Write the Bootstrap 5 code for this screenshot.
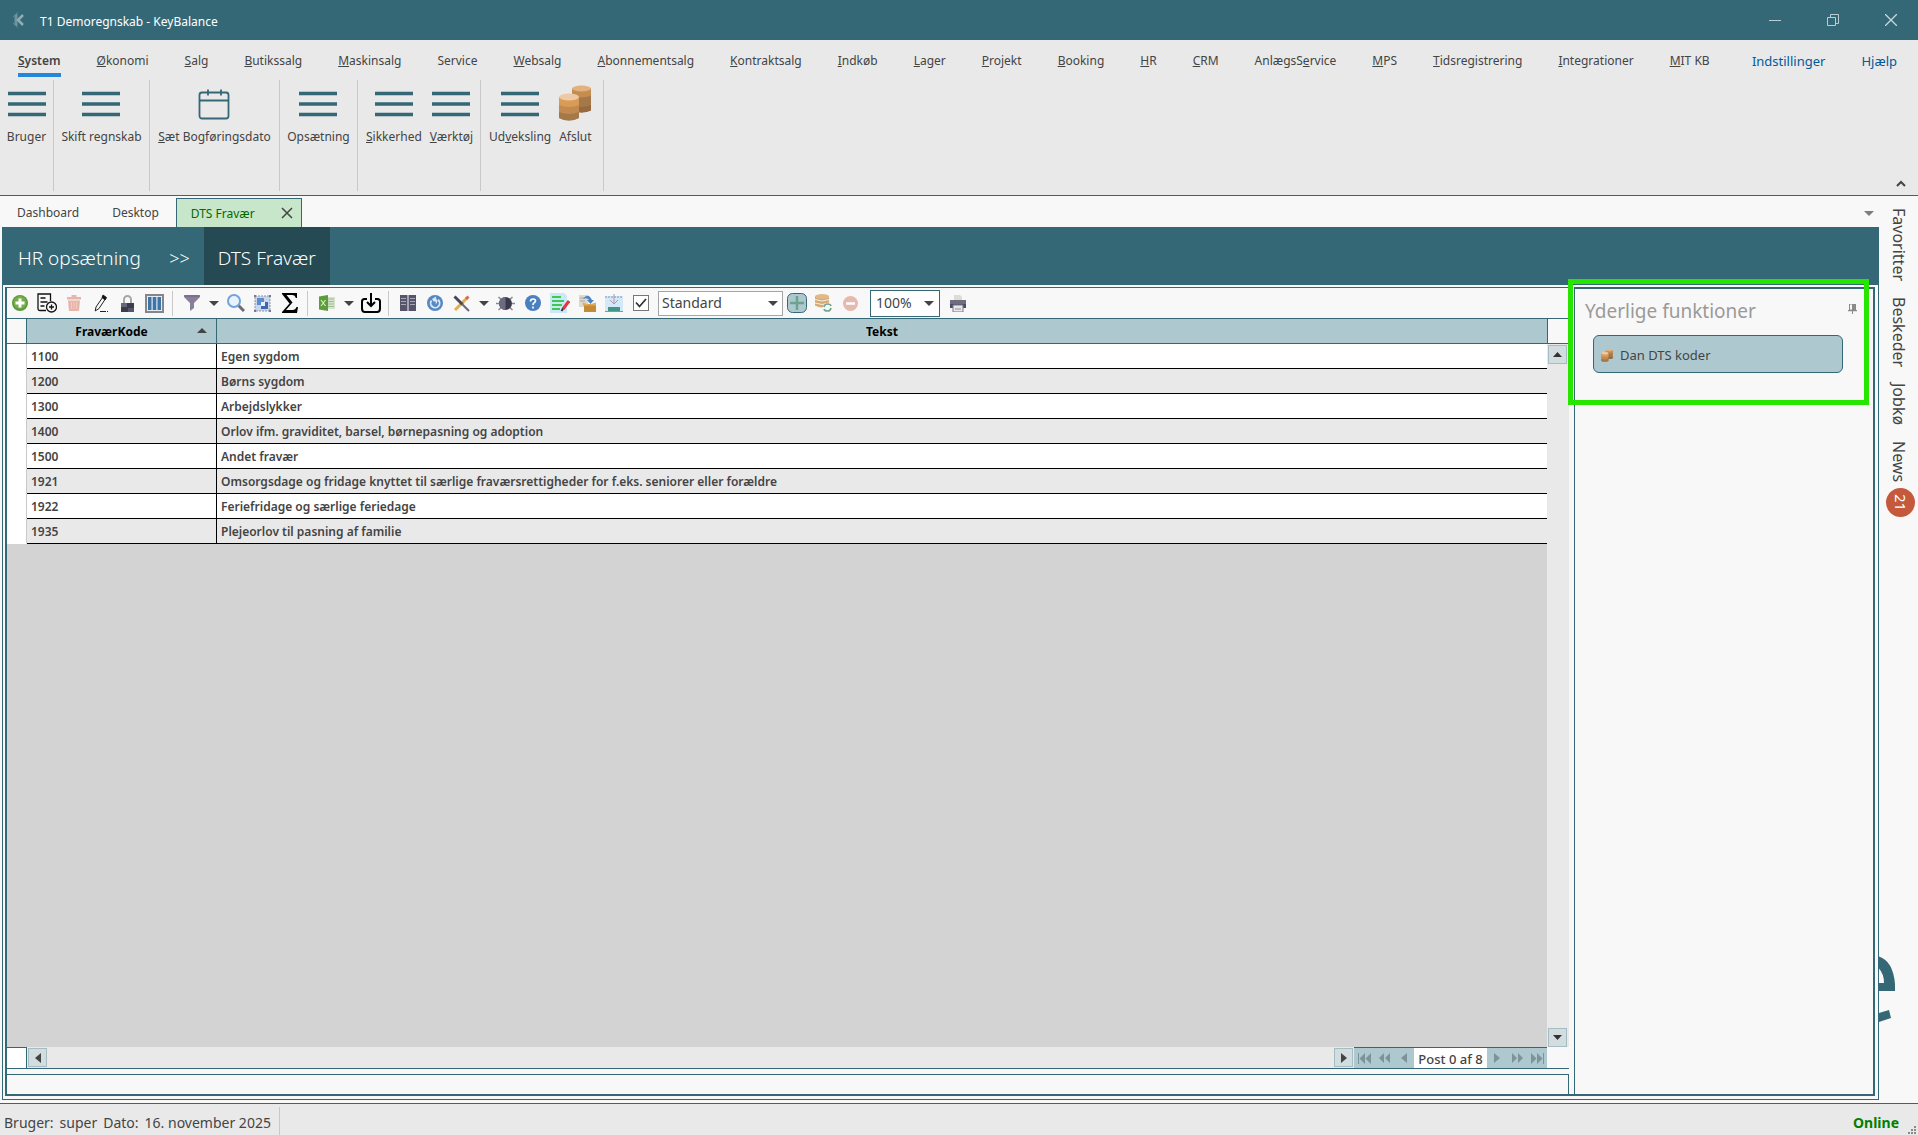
<!DOCTYPE html>
<html lang="da">
<head>
<meta charset="utf-8">
<meta name="viewport" content="width=device-width, initial-scale=1">
<title>T1 Demoregnskab - KeyBalance</title>
<link rel="stylesheet" href="https://cdn.jsdelivr.net/npm/bootstrap@5.3.0/dist/css/bootstrap.min.css">
<script src="https://cdn.jsdelivr.net/npm/bootstrap@5.3.0/dist/js/bootstrap.bundle.min.js"></script>
<style>
:root{--kb-teal:#356876;--kb-dark:#254a54;--kb-soft:#adc9cf;--kb-grey:#e9e9e9;--kb-bg:#f8f8f8;--kb-text:#444}
body{font-family:"Noto Sans","Open Sans",sans-serif;font-size:12px;line-height:16px;color:var(--kb-text);background:var(--kb-bg)}
button{font:inherit;color:inherit;background:none;border:0;padding:0}
svg{display:block;flex:none}
.kb-title{height:40px;background:var(--kb-teal);color:#fff;padding-left:10px}
.kb-title .kb-win{width:58px;height:40px;display:flex;align-items:center;justify-content:center;padding-left:4px}
.kb-menu{height:40px;padding:0 21px 0 18px;gap:36px;background:var(--kb-grey)}
.kb-menu .nav-link{padding:13px 0 7px;color:inherit;border-bottom:4px solid transparent;line-height:16px;height:37px}
.kb-menu .nav-link.active{border-color:#2488d8;font-weight:600}
.kb-menu .nav-link.kb-blue{color:#005a9e;font-size:13px}
.kb-ribbon{height:116px;background:var(--kb-grey);border-bottom:1px solid var(--kb-teal)}
.kb-group{padding:5px 0 0;justify-content:center;gap:8px;height:111px;border-right:1px solid #c9c9c9;min-width:54px}
.kb-group.kb-m{min-width:78px}
.kb-group.kb-l{min-width:96px}
.kb-group.kb-xl{min-width:123px;justify-content:flex-start;padding-left:8px}
.kb-group.kb-xxl{min-width:130px}
.kb-group button{display:flex;flex-direction:column;align-items:center;gap:8px;height:60px}
.kb-tabs{height:31px;padding-right:5px}
.kb-tabs .nav-link{color:inherit;padding:0 16px 0 17px;line-height:34px;height:31px;border:0}
.kb-tabs .kb-open{height:29px;margin:2px 0 0 1px;border:1px solid var(--kb-teal);border-bottom:0;background:#c8e6c9;padding:0 8px 0 14px;width:126px}
.kb-tabs .kb-open .nav-link{padding:0;height:28px;line-height:29px;color:#046a04}
.kb-frame{margin:0 0 3px 2px;border:1px solid var(--kb-teal)}
.kb-crumbs{height:58px;margin:-1px 0 0;background:var(--kb-teal);color:#fff;font-size:19px;font-weight:300;line-height:62px}
.kb-crumbs a{color:#fff;text-decoration:none;padding-left:15px}
.kb-crumbs .kb-sep{font-size:18px;width:63px;text-align:right;padding-right:14px}
.kb-crumbs .kb-here{background:var(--kb-dark);width:126px;text-align:center}
.kb-content{margin:2px 3px 3px 2px;border-left:2px solid var(--kb-teal);border-bottom:2px solid var(--kb-teal);gap:5px}
.kb-tools{height:32px;border:solid var(--kb-teal);border-width:1px 0;margin-left:-1px}
.kb-tools button,.kb-tools .kb-tick{width:27px;height:30px;display:flex;align-items:center;justify-content:center;flex:none}
.kb-tools .kb-caret{width:17px}
.kb-tools .kb-bar{width:1px;height:25px;background:#c9c9c9;margin:0 5px 0 4px;flex:none}
.kb-pick{appearance:none;color:inherit;background:#fff url("data:image/svg+xml,%3Csvg xmlns='http://www.w3.org/2000/svg' width='10' height='5'%3E%3Cpath d='M0 0h10L5 5z' fill='%23444'/%3E%3C/svg%3E") no-repeat right 4px center;border:1px solid #a5a5a5;border-radius:0;padding:0 3px;font-size:14px;height:25px;line-height:22px}
.kb-style{width:125px}
.kb-zoom{width:70px;height:27px;border-color:var(--kb-teal);background-position:right 5px center;padding:0 5px;margin-left:6px}
.kb-tick input{appearance:none;margin:0;width:16px;height:16px;border:1px solid #777;background:#fff url("data:image/svg+xml,%3Csvg xmlns='http://www.w3.org/2000/svg' width='14' height='14'%3E%3Cpath d='M2 6.500l3.500 4L12 3' fill='none' stroke='%23333' stroke-width='1.800'/%3E%3C/svg%3E") no-repeat center}
.kb-grid{background:#d3d3d3}
.kb-grid table{width:100%;table-layout:fixed;border-collapse:separate;border-spacing:0;font-weight:600}
.kb-grid col.kb-c0{width:20px}
.kb-grid col.kb-c1{width:190px}
.kb-grid th,.kb-grid td{height:25px;padding:2px 4px 0;line-height:22px;border-bottom:1px solid #000;border-right:1px solid #000;overflow:hidden;white-space:nowrap}
.kb-grid td:last-child,.kb-grid th:last-child{border-right:0}
.kb-grid td{background:#fff}
.kb-grid tr:nth-child(even) td{background:var(--kb-grey)}
.kb-grid tr td:first-child{background:#fff;border-color:#fff #c9c9c9 #fff #fff}
.kb-grid th{background:var(--kb-soft);color:#000;text-align:center;border-color:var(--kb-teal);font-weight:700;position:relative}
.kb-grid th:first-child{background:var(--kb-bg)}
.kb-grid th.kb-sorted{padding-right:24px}
.kb-grid th svg{position:absolute;right:9px;top:9px}
.kb-vbar{width:22px;background:var(--kb-grey)}
.kb-vbar .kb-corner{height:25px;border:solid var(--kb-teal);border-width:0 0 1px 1px;background:var(--kb-bg);margin-bottom:1px}
.kb-arrow{width:19px;height:19px;background:#d2dde0 !important;border:1px solid #a4bcc2 !important;display:flex;align-items:center;justify-content:center;margin:0 1px}
.kb-hbar{height:22px;border-bottom:1px solid var(--kb-teal);background:var(--kb-grey)}
.kb-hbar .kb-stub{width:20px;background:#fff;border:solid var(--kb-teal);border-width:1px 1px 0 0}
.kb-hbar .kb-void{width:22px;background:var(--kb-bg)}
.kb-nav{background:var(--kb-soft);border-top:1px solid var(--kb-teal);color:#7d9398}
.kb-nav button{width:20px;display:flex;align-items:center;justify-content:center}
.kb-nav .kb-post{width:73px;background:#fff;color:var(--kb-text);font-size:13px;font-weight:500;line-height:22px;text-align:center}
.kb-info{height:20px;margin-top:5px;border:solid var(--kb-teal);border-width:1px 1px 0 0}
.kb-side{width:301px;border:solid var(--kb-teal);border-width:2px 2px 0 1px;position:relative;padding:10px 10px 0}
.kb-side h2{font-size:19px;line-height:24px;font-weight:400;color:#9a9a9a;margin:0}
.kb-pin{margin:5px 6px 0 0}
.kb-dan{width:250px;height:38px;margin:12px 0 0 8px;border:1px solid var(--kb-teal) !important;border-radius:6px;background:var(--kb-soft) !important;display:flex;align-items:center;gap:7px;padding:2px 7px 0 !important;font-size:13px !important}
.kb-focus{position:absolute;left:-7px;top:-10px;width:301px;height:126px;border:5px solid #26e600;pointer-events:none}
.kb-rail{width:39px;padding:12px 0 0 9px}
.kb-rail a{writing-mode:vertical-rl;color:inherit;text-decoration:none;font-size:16px;line-height:22px;margin-bottom:16px}
.kb-rail .kb-count{writing-mode:vertical-rl;width:29px;height:29px;border-radius:50%;background:#c4593c;color:#fff;font-size:15px;line-height:29px;text-align:center;margin:-10px 0 0 -2px}
.kb-e{margin:auto 0 77px -9px}
.kb-status{height:32px;background:var(--kb-grey);border-top:1px solid var(--kb-teal);font-size:14px;line-height:20px;padding:3px 0 0 4px;position:relative}
.kb-status .kb-who{border-right:1px solid #c9c9c9;padding:6px 6px 0 0;width:276px;white-space:nowrap}
.kb-status .kb-gap{margin-left:6px}
.kb-status .kb-on{color:#008000;font-weight:700;padding:6px 19px 0 0}
.kb-grip{position:absolute;right:2px;bottom:1px}
.kb-fit-y{min-height:0}
.kb-fit-x{min-width:0}
</style>
</head>
<body class="d-flex flex-column vh-100 overflow-hidden">
<svg width="0" height="0" class="position-absolute">
  <symbol id="lines" viewBox="0 0 38 36"><path d="M0 8.500h38M0 19h38M0 29.500h38" stroke="#356876" stroke-width="3.500"/></symbol>
  <symbol id="coins" viewBox="0 0 32 36">
    <path d="M13 3.500v22q9.500 4 19 0v-22z" fill="#a5784a"/><path d="M13 3.500v7q9.500 4 19 0v-7z" fill="#c58c50"/><path d="M13 20v5.500q9.500 4 19 0V20q-9.500 4-19 0z" fill="#96693f"/><ellipse cx="22.500" cy="3.500" rx="9.500" ry="3" fill="#e2b17e"/>
    <path d="M0 12v21q10 5 20 0V12z" fill="#c08a50"/><path d="M0 12v8q10 4 20 0v-8z" fill="#d99b55"/><path d="M0 27v6q10 5 20 0v-6q-10 4-20 0z" fill="#a5784a"/><ellipse cx="10" cy="12" rx="10" ry="3.500" fill="#edc9a4"/>
  </symbol>
  <symbol id="down" viewBox="0 0 10 5"><path d="M0 0h10L5 5z" fill="currentColor"/></symbol>
  <symbol id="left" viewBox="0 0 6 10"><path d="M6 0v10L0 5z" fill="currentColor"/></symbol>
  <symbol id="right" viewBox="0 0 6 10"><path d="M0 0v10l6-5z" fill="currentColor"/></symbol>
</svg>

<header class="kb-title d-flex align-items-center flex-shrink-0">
  <svg width="18" height="18" viewBox="0 0 18 18" fill="none" stroke="#8fadb5"><path d="M6 3v12" stroke="#6f929c" stroke-width="3"/><path d="M13 4L8 9l5 5" stroke-width="2.500"/><path d="M8 1L3 6M8 17l-5-5" stroke="#5c8490"/></svg>
  <span class="ms-2 ps-1 pt-1 me-auto">T1 Demoregnskab - KeyBalance</span>
  <button class="kb-win" aria-label="Minimer"><svg width="12" height="12"><path d="M0 6.500h12" stroke="#b9cdd2"/></svg></button>
  <button class="kb-win" aria-label="Gendan"><svg width="12" height="12" viewBox="0 0 12 12" fill="none" stroke="#b9cdd2"><path d="M.5 3.500h8v8h-8zM3.500 3V.5h8v9H9"/></svg></button>
  <button class="kb-win" aria-label="Luk"><svg width="12" height="12"><path d="M0 0l12 12M12 0L0 12" stroke="#c9d8dc" stroke-width="1.300"/></svg></button>
</header>

<nav class="kb-menu nav flex-nowrap flex-shrink-0">
  <a class="nav-link active" href="#"><u>S</u>ystem</a>
  <a class="nav-link" href="#"><u>Ø</u>konomi</a>
  <a class="nav-link" href="#"><u>S</u>alg</a>
  <a class="nav-link" href="#"><u>B</u>utikssalg</a>
  <a class="nav-link" href="#"><u>M</u>askinsalg</a>
  <a class="nav-link" href="#">Service</a>
  <a class="nav-link" href="#"><u>W</u>ebsalg</a>
  <a class="nav-link" href="#"><u>A</u>bonnementsalg</a>
  <a class="nav-link" href="#"><u>K</u>ontraktsalg</a>
  <a class="nav-link" href="#"><u>I</u>ndkøb</a>
  <a class="nav-link" href="#"><u>L</u>ager</a>
  <a class="nav-link" href="#"><u>P</u>rojekt</a>
  <a class="nav-link" href="#"><u>B</u>ooking</a>
  <a class="nav-link" href="#"><u>H</u>R</a>
  <a class="nav-link" href="#"><u>C</u>RM</a>
  <a class="nav-link" href="#">AnlægsS<u>e</u>rvice</a>
  <a class="nav-link" href="#"><u>M</u>PS</a>
  <a class="nav-link" href="#"><u>T</u>idsregistrering</a>
  <a class="nav-link" href="#"><u>I</u>ntegrationer</a>
  <a class="nav-link" href="#"><u>M</u>IT KB</a>
  <a class="nav-link kb-blue ms-auto" href="#">Indstillinger</a>
  <a class="nav-link kb-blue" href="#">Hjælp</a>
</nav>

<section class="kb-ribbon d-flex flex-shrink-0">
  <div class="kb-group d-flex"><button><svg width="38" height="36"><use href="#lines"/></svg>Bruger</button></div>
  <div class="kb-group kb-l d-flex"><button><svg width="38" height="36"><use href="#lines"/></svg>Skift regnskab</button></div>
  <div class="kb-group kb-xxl d-flex"><button><svg width="32" height="36" viewBox="0 0 32 36" fill="none" stroke="#356876" stroke-width="1.800"><rect x="1.500" y="7.500" width="29" height="26" rx="2.500"/><path d="M1.500 15.500h29M10 4.500v6M23 4.500v6"/></svg><span><u>S</u>æt Bogføringsdato</span></button></div>
  <div class="kb-group kb-m d-flex"><button><svg width="38" height="36"><use href="#lines"/></svg>Opsætning</button></div>
  <div class="kb-group kb-xl d-flex"><button><svg width="38" height="36"><use href="#lines"/></svg><span><u>S</u>ikkerhed</span></button><button><svg width="38" height="36"><use href="#lines"/></svg><span><u>V</u>ærktøj</span></button></div>
  <div class="kb-group kb-xl d-flex"><button><svg width="38" height="36"><use href="#lines"/></svg><span>Ud<u>v</u>eksling</span></button><button><svg width="32" height="36"><use href="#coins"/></svg>Afslut</button></div>
  <button class="ms-auto align-self-end me-2 pe-1 pb-1 mb-1" aria-label="Skjul bånd"><svg width="10" height="7"><path d="M1 6l4-4 4 4" fill="none" stroke="#444" stroke-width="2"/></svg></button>
</section>

<main class="d-flex flex-grow-1 kb-fit-y">
  <div class="d-flex flex-column flex-grow-1 kb-fit-x">
    <div class="kb-tabs d-flex flex-shrink-0">
      <a class="nav-link" href="#">Dashboard</a>
      <a class="nav-link" href="#">Desktop</a>
      <div class="kb-open d-flex justify-content-between align-items-center"><a class="nav-link" href="#">DTS Fravær</a><button aria-label="Luk fane"><svg width="12" height="12"><path d="M1 1l10 10M11 1L1 11" stroke="#444" stroke-width="1.500"/></svg></button></div>
      <button class="ms-auto pt-1 text-black-50" aria-label="Vis faner"><svg width="10" height="5"><use href="#down"/></svg></button>
    </div>
    <div class="kb-frame d-flex flex-column flex-grow-1">
      <div class="kb-crumbs d-flex flex-shrink-0"><a href="#">HR opsætning</a><span class="kb-sep">&gt;&gt;</span><span class="kb-here">DTS Fravær</span></div>
      <div class="kb-content d-flex flex-grow-1">
        <section class="d-flex flex-column flex-grow-1">
          <div class="kb-tools d-flex align-items-center">
            <button aria-label="Opret"><svg width="16" height="16" viewBox="0 0 16 16"><circle cx="8" cy="8" r="8" fill="#5d9a3a"/><circle cx="8" cy="7.500" r="6.500" fill="#74ad4d"/><path d="M8 3.500v9M3.500 8h9" stroke="#fff" stroke-width="3"/></svg></button>
            <button aria-label="Ny"><svg width="20" height="20" viewBox="0 0 20 20" fill="none" stroke="#111" stroke-width="1.300"><path d="M9 17.500H3Q1 17.500 1 15.500V1h12.500v7M3.500 5h5M3.500 9h7M3.500 13h4"/><circle cx="14.500" cy="14" r="5"/><path d="M14.500 11.500v5M12 14h5"/></svg></button>
            <button aria-label="Slet"><svg width="14" height="16" viewBox="0 0 14 16"><path d="M0 2h4.500V0h5v2H14v2.500H0zM1 5.500h12L12 16H2z" fill="#e8b5a8"/><path d="M4.500 7v7M7 7v7M9.500 7v7" stroke="#efccc2"/></svg></button>
            <button aria-label="Ret"><svg width="14" height="18" viewBox="0 0 14 18" fill="none" stroke="#222"><path d="M9.500 2L2 13l-.8 4L5 14.500 12 4z"/><path d="M9 1l3.500 2.500L11 6 8 3.500z" fill="#111"/><path d="M6 17.500h6M13 17.500h1"/></svg></button>
            <button aria-label="Lås"><svg width="15" height="17" viewBox="0 0 15 17"><path d="M4 8V4.500a3.500 3.500 0 017 0V8" fill="none" stroke="#aaa6a2" stroke-width="2"/><path d="M1 8h13v9H1z" fill="#3b3c4c"/><path d="M1 8h6v4H1z" fill="#66687a"/><path d="M8 13h6v4H8z" fill="#55566a"/></svg></button>
            <button aria-label="Kolonner"><svg width="19" height="19" viewBox="0 0 19 19"><path d="M1 1h17v17H1z" fill="#e2edf5" stroke="#85858a" stroke-width="2"/><path d="M3 3h3.500v13H3zM7.700 3h3.600v13H7.700zM12.500 3H16v13h-3.500z" fill="#3f74a8"/></svg></button>
            <span class="kb-bar"></span>
            <button aria-label="Filter"><svg width="16" height="16" viewBox="0 0 16 16"><path d="M0 0h16v2l-6 6v5l-4 3V8L0 2z" fill="#8a7f98"/><path d="M1 1h14" stroke="#6e6180"/></svg></button>
            <button class="kb-caret" aria-label="Filtervalg"><svg width="10" height="5"><use href="#down"/></svg></button>
            <button aria-label="Søg"><svg width="18" height="18" viewBox="0 0 18 18"><path d="M11 11l6 6" stroke="#6a6d75" stroke-width="3"/><circle cx="7" cy="7" r="6" fill="#eaf3fc" stroke="#70a4dc" stroke-width="2"/></svg></button>
            <button aria-label="Markér"><svg width="17" height="17" viewBox="0 0 17 17"><path d="M1 1h15v15H1z" fill="#c9d6ec" stroke="#8e93a6" stroke-dasharray="2 1"/><path d="M3 3h7v7H3z" fill="#5c8cd0"/><path d="M7 7h7v7H7z" fill="#3c68ac"/><path d="M7 7h4v4H7z" fill="#e8eefa"/><path d="M0 0h2v2H0zM15 0h2v2h-2zM0 15h2v2H0zM15 15h2v2h-2z" fill="#77798c"/></svg></button>
            <button aria-label="Sum"><svg width="16" height="20" viewBox="0 0 16 20"><path d="M0 0h15v5h-1.200Q13 2 10 2H4.500l6 7.500L4 17h6.500q3 0 4-3H16l-1 6H0v-1l7.500-8.500L0 1z" fill="#000"/></svg></button>
            <span class="kb-bar"></span>
            <button aria-label="Excel"><svg width="16" height="16" viewBox="0 0 16 16"><path d="M8 2h8v12H8z" fill="#d5e2cc"/><path d="M9 4h6M9 6.500h6M9 9h6M9 11.500h6" stroke="#a3bf92"/><path d="M0 1.500L9 0v16l-9-1.500z" fill="#5c9c3b"/><path d="M2 5l4.500 6M6.500 5L2 11" stroke="#d8ecc9" stroke-width="1.200"/></svg></button>
            <button class="kb-caret" aria-label="Excelvalg"><svg width="10" height="5"><use href="#down"/></svg></button>
            <button aria-label="Importer"><svg width="20" height="20" viewBox="0 0 20 20" fill="none" stroke="#000" stroke-width="2"><path d="M6 6H3.500Q1 6 1 8.500v7Q1 19 4 19h12q3 0 3-3.500v-7Q19 6 16.500 6H14M10 0v12.500M6 9l4 4 4-4"/></svg></button>
            <span class="kb-bar"></span>
            <button aria-label="Liste"><svg width="16" height="16" viewBox="0 0 16 16"><path d="M0 0h7.500v16H0zM8.500 0H16v16H8.500z" fill="#55546a"/><path d="M1 3.500h5M10 3.500h5M1 6.500h5M10 6.500h5M1 9.500h5M10 9.500h5" stroke="#a9a8b6"/></svg></button>
            <button aria-label="Opdater"><svg width="16" height="16" viewBox="0 0 16 16"><circle cx="8" cy="8" r="8" fill="#5688c4"/><path d="M4.500 5.500A4.500 4.500 0 1011 4.700" fill="none" stroke="#dbe8f6" stroke-width="1.800"/><path d="M5 4l4-2.500v2q3 3-.5 6Q9.500 7 8 6l-1 1z" fill="#dbe8f6"/></svg></button>
            <button aria-label="Værktøjer"><svg width="17" height="17" viewBox="0 0 17 17" stroke-width="3"><path d="M14 3L2 15" stroke="#e0b04e"/><path d="M13 4l2.500-2.500" stroke="#dc6a4c"/><path d="M1.500 1.500l8 8" stroke="#4a4658"/><path d="M9 9l7 7" stroke="#6a6678" stroke-width="2"/></svg></button>
            <button class="kb-caret" aria-label="Værktøjsvalg"><svg width="10" height="5"><use href="#down"/></svg></button>
            <button aria-label="Fejlsøg"><svg width="19" height="17" viewBox="0 0 19 17"><path d="M0 8.500h19M2.500 2l14 13M16.500 2l-14 13" stroke="#85889a" stroke-width="1.500"/><circle cx="9.500" cy="8.500" r="6.500" fill="#3b3a4c"/><path d="M9.500 2a6.500 6.500 0 000 13z" fill="#6b6c80"/></svg></button>
            <button aria-label="Hjælp"><svg width="16" height="16" viewBox="0 0 16 16"><circle cx="8" cy="8" r="8" fill="#4a7fc0"/><path d="M5.500 6.500q0-2.500 2.500-2.500t2.500 2q0 1-1.300 1.800T8 10M8 11.500v2" fill="none" stroke="#fff" stroke-width="1.700"/></svg></button>
            <button aria-label="Noter"><svg width="20" height="20" viewBox="0 0 20 20"><path d="M0 0h14l3 3v17H0z" fill="#c9e8f8"/><path d="M2 4h9M2 8h12M2 12h10M2 16h8" stroke="#3fc94e" stroke-width="2"/><path d="M19 8l-6 8" stroke="#e8343c" stroke-width="3"/><path d="M13 15.500L11.500 18" stroke="#333" stroke-width="2"/></svg></button>
            <button aria-label="Pak"><svg width="18" height="18" viewBox="0 0 18 18"><path d="M1 1h9v12H1z" fill="#ded8cf"/><path d="M2 4h5M2 7h5" stroke="#a8a49c"/><path d="M5 5q5-7 9 1h2l-3.500 4L9 6h2q-2-3-6-1z" fill="#4a83c2"/><path d="M6 10h12v8H6z" fill="#c58a35"/><path d="M4.500 8.500l7 2 6.500-2v3H5z" fill="#e0ac58"/></svg></button>
            <button aria-label="Skærm"><svg width="18" height="18" viewBox="0 0 18 18"><path d="M0 2h18v15H0z" fill="#d3e8f8"/><path d="M0 3h18" stroke="#7f96b4" stroke-dasharray="2 1"/><path d="M9 0v9M5 6l4 4 4-4" stroke="#b594a5" fill="none"/><path d="M3 13h12v4H3z" fill="#3f9684"/><path d="M0 17.500h18" stroke="#7f96b4"/></svg></button>
            <label class="kb-tick"><input type="checkbox" checked aria-label="Vis"></label>
            <select class="kb-pick kb-style ms-1" aria-label="Layout"><option>Standard</option></select>
            <button aria-label="Tilføj layout"><svg width="20" height="20" viewBox="0 0 20 20"><rect x=".5" y=".5" width="19" height="19" rx="5" fill="#adc9cf" stroke="#356876"/><path d="M10 3v14M3 10h14" stroke="#6fa28c" stroke-width="2.500"/></svg></button>
            <button aria-label="Gem layout"><svg width="17" height="18" viewBox="0 0 17 18"><path d="M0 2.500h14v9q-7 4-14 0z" fill="#d6aa74"/><ellipse cx="7" cy="2.500" rx="7" ry="2.500" fill="#e0ba8a"/><path d="M0 5.500q7 3 14 0M0 9q7 3 14 0" stroke="#f8efe2" fill="none"/><circle cx="12.500" cy="13.500" r="4.500" fill="#f8f8f8"/><path d="M9 13q.5-3 3.500-3t3.500 2M16 14q-.5 3-3.500 3T9 15" stroke="#6fa58f" stroke-width="1.600" fill="none"/></svg></button>
            <button aria-label="Fjern layout"><svg width="15" height="15" viewBox="0 0 15 15"><circle cx="7.500" cy="7.500" r="7.500" fill="#e6b9ae"/><path d="M3 7.500h9" stroke="#fff" stroke-width="2.500"/></svg></button>
            <select class="kb-pick kb-zoom" aria-label="Zoom"><option>100%</option></select>
            <button class="ms-1" aria-label="Udskriv"><svg width="16" height="17" viewBox="0 0 16 17"><path d="M4 0h6l2 2v4H4z" fill="#dedad4"/><path d="M0 5h16v8H0z" fill="#6d6e80"/><path d="M0 9h16v4H0z" fill="#4c4d60"/><path d="M3 10h10v7H3z" fill="#e8e8ec" stroke="#77798c"/><path d="M5 14h6" stroke="#8b8c98"/></svg></button>
          </div>
          <div class="d-flex flex-grow-1">
            <div class="kb-grid flex-grow-1">
              <table>
                <colgroup><col class="kb-c0"><col class="kb-c1"><col></colgroup>
                <thead><tr><th></th><th class="kb-sorted">FraværKode<svg width="10" height="5"><path d="M0 5h10L5 0z" fill="#444"/></svg></th><th>Tekst</th></tr></thead>
                <tbody>
                  <tr><td></td><td>1100</td><td>Egen sygdom</td></tr>
                  <tr><td></td><td>1200</td><td>Børns sygdom</td></tr>
                  <tr><td></td><td>1300</td><td>Arbejdslykker</td></tr>
                  <tr><td></td><td>1400</td><td>Orlov ifm. graviditet, barsel, børnepasning og adoption</td></tr>
                  <tr><td></td><td>1500</td><td>Andet fravær</td></tr>
                  <tr><td></td><td>1921</td><td>Omsorgsdage og fridage knyttet til særlige fraværsrettigheder for f.eks. seniorer eller forældre</td></tr>
                  <tr><td></td><td>1922</td><td>Feriefridage og særlige feriedage</td></tr>
                  <tr><td></td><td>1935</td><td>Plejeorlov til pasning af familie</td></tr>
                </tbody>
              </table>
            </div>
            <div class="kb-vbar d-flex flex-column flex-shrink-0">
              <div class="kb-corner"></div>
              <button class="kb-arrow" aria-label="Rul op"><svg width="9" height="5"><path d="M0 5h9L4.500 0z" fill="#333"/></svg></button>
              <button class="kb-arrow mt-auto" aria-label="Rul ned"><svg width="9" height="5"><path d="M0 0h9L4.500 5z" fill="#333"/></svg></button>
            </div>
          </div>
          <div class="kb-hbar d-flex flex-shrink-0">
            <div class="kb-stub"></div>
            <button class="kb-arrow mt-auto mb-auto" aria-label="Rul til venstre"><svg width="6" height="10"><use href="#left"/></svg></button>
            <button class="kb-arrow ms-auto mt-auto mb-auto" aria-label="Rul til højre"><svg width="6" height="10"><use href="#right"/></svg></button>
            <div class="kb-nav d-flex">
              <button aria-label="Første"><svg width="13" height="11" fill="currentColor"><path d="M0 0h1v11H0zM7 0v11L1.500 5.500zM13 0v11L7.500 5.500z"/></svg></button>
              <button aria-label="Side tilbage"><svg width="11" height="10" fill="currentColor"><path d="M5 0v10L0 5zM11 0v10L6 5z"/></svg></button>
              <button aria-label="Forrige"><svg width="6" height="10"><use href="#left"/></svg></button>
              <span class="kb-post">Post 0 af 8</span>
              <button aria-label="Næste"><svg width="6" height="10"><use href="#right"/></svg></button>
              <button aria-label="Side frem"><svg width="11" height="10" fill="currentColor"><path d="M0 0v10l5-5zM6 0v10l5-5z"/></svg></button>
              <button aria-label="Sidste"><svg width="13" height="11" fill="currentColor"><path d="M12 0h1v11h-1zM0 0v11l5.500-5.500zM6 0v11l5.500-5.500z"/></svg></button>
            </div>
            <div class="kb-void"></div>
          </div>
          <div class="kb-info flex-shrink-0"></div>
        </section>
        <aside class="kb-side flex-shrink-0">
          <div class="d-flex justify-content-between align-items-start"><h2>Yderlige funktioner</h2><button class="kb-pin" aria-label="Fastgør"><svg width="9" height="10" viewBox="0 0 9 10"><path d="M1.500 0h6v6h-6z" fill="none" stroke="#8a8a8a"/><path d="M4 0h3.500v6H4zM0 6h9v1.200H0zM4 7h1v3H4z" fill="#8a8a8a"/></svg></button></div>
          <button class="kb-dan"><svg width="12" height="13"><use href="#coins"/></svg>Dan DTS koder</button>
          <div class="kb-focus"></div>
        </aside>
      </div>
    </div>
  </div>
  <nav class="kb-rail d-flex flex-column align-items-start flex-shrink-0">
    <a href="#">Favoritter</a>
    <a href="#">Beskeder</a>
    <a href="#">Jobkø</a>
    <a href="#">News</a>
    <span class="kb-count">21</span>
    <svg class="kb-e" width="16" height="75" viewBox="0 0 16 75"><path d="M0 5.500Q14 10 16 33v7H0v-8h5Q5 23 0 17.500zM0 62l10-3 2 8-12 4z" fill="#356876"/></svg>
  </nav>
</main>

<footer class="kb-status d-flex justify-content-between flex-shrink-0">
  <span class="kb-who"><span>Bruger:</span><span class="kb-gap">super</span><span class="kb-gap">Dato:</span><span class="kb-gap">16. november 2025</span></span>
  <span class="kb-on">Online</span>
  <svg class="kb-grip" width="8" height="8" fill="#8a8a8a"><path d="M6 0h2v2H6zM6 3h2v2H6zM3 3h2v2H3zM0 6h2v2H0zM3 6h2v2H3zM6 6h2v2H6z"/></svg>
</footer>
</body>
</html>
